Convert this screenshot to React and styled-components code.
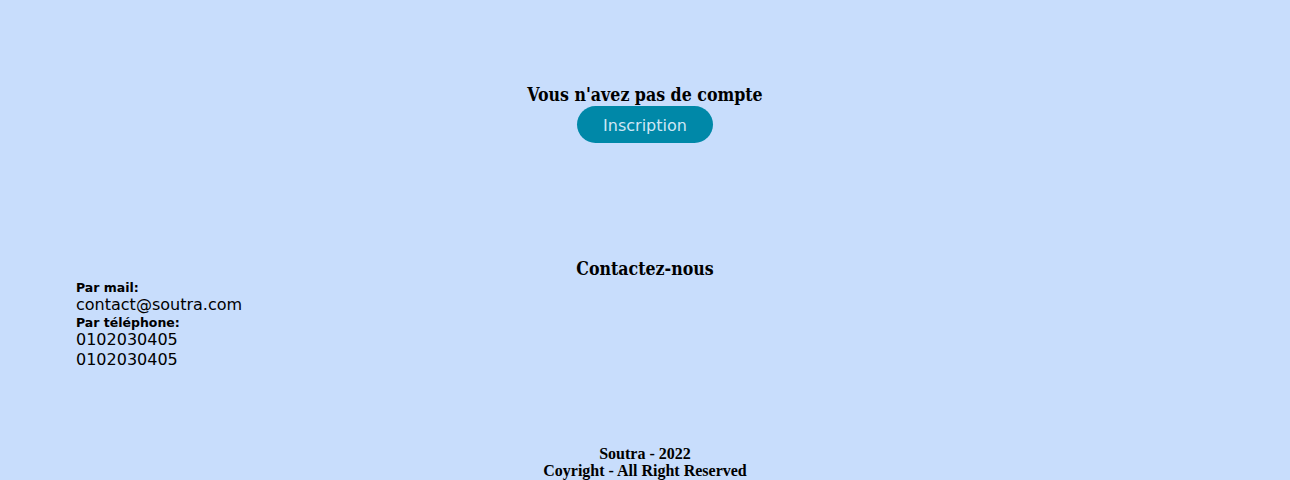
import React from "react"
import styled, { createGlobalStyle } from "styled-components"

const GlobalStyle = createGlobalStyle`
  html, body {
    margin: 0;
    padding: 0;
    background: #c8ddfc;
  }
  body {
    font-family: "DejaVu Sans", sans-serif;
    width: 1290px;
    height: 480px;
    overflow: hidden;
  }
`

const Page = styled.div`
  display: flex;
  flex-direction: column;
  height: 480px;
`

const SignupSection = styled.section`
  display: flex;
  flex-direction: column;
  align-items: center;
  padding-top: 84px;
`

const Heading = styled.h2`
  margin: 0;
  font-family: "DejaVu Serif Condensed", "DejaVu Serif", serif;
  font-weight: 700;
  font-size: 17.6px;
  line-height: 22px;
  color: #000;
`

const Button = styled.button`
  width: 136px;
  height: 37px;
  padding: 1px 0 0;
  border: none;
  border-radius: 20px;
  background: #0088a8;
  color: #cfe6f5;
  font-family: "DejaVu Sans", sans-serif;
  font-size: 16px;
  cursor: pointer;
`

const ContactSection = styled.section`
  display: flex;
  flex-direction: column;
  padding-top: 115px;
`

const ContactTitle = styled(Heading)`
  align-self: center;
`

const ContactList = styled.div`
  padding-left: 76px;
  display: flex;
  flex-direction: column;
`

const Label = styled.span`
  font-weight: 700;
  font-size: 12.5px;
  line-height: 15px;
`

const Value = styled.span`
  font-size: 16px;
  line-height: 20px;
`

const Footer = styled.footer`
  margin-top: auto;
  padding-bottom: 1px;
  text-align: center;
  font-family: "Liberation Serif", serif;
  font-weight: 700;
  font-size: 16px;
  line-height: 17px;
`

const App = () => {
  return (
    <Page>
      <GlobalStyle />
      <SignupSection>
        <Heading>Vous n'avez pas de compte</Heading>
        <Button>Inscription</Button>
      </SignupSection>
      <ContactSection>
        <ContactTitle>Contactez-nous</ContactTitle>
        <ContactList>
          <Label>Par mail:</Label>
          <Value>contact@soutra.com</Value>
          <Label>Par téléphone:</Label>
          <Value>0102030405</Value>
          <Value>0102030405</Value>
        </ContactList>
      </ContactSection>
      <Footer>
        <div>Soutra - 2022</div>
        <div>Coyright - All Right Reserved</div>
      </Footer>
    </Page>
  )
}

export default App
